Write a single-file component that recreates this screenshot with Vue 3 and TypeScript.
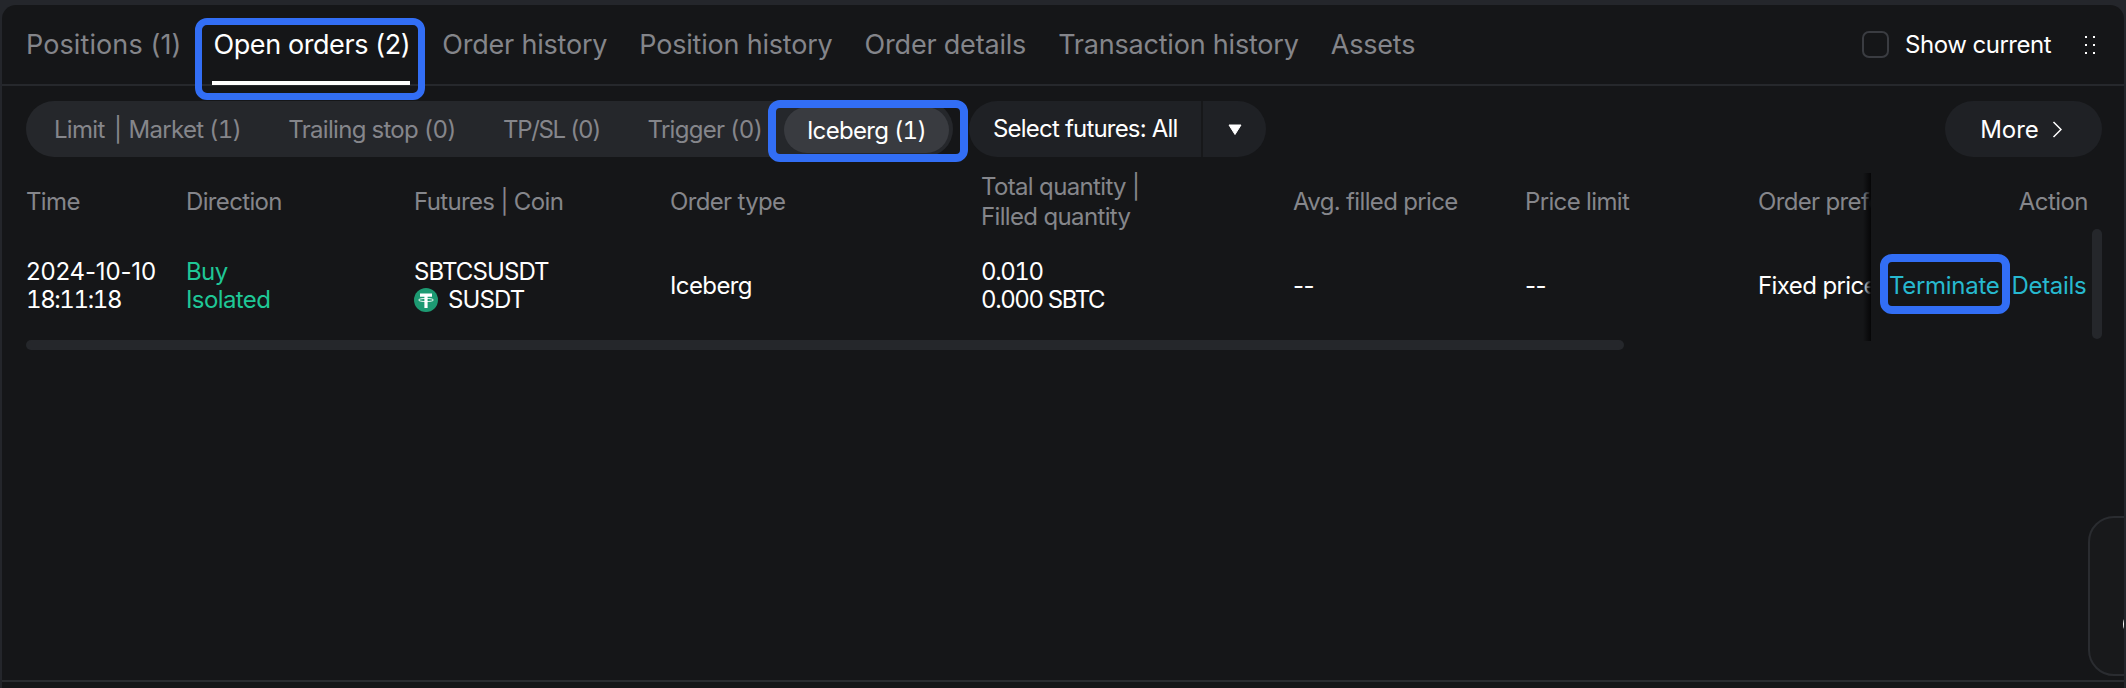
<script setup lang="ts">
const tabs = [
  { label: 'Positions (1)', kind: 'first' },
  { label: 'Open orders (2)', kind: 'active' },
  { label: 'Order history' },
  { label: 'Position history' },
  { label: 'Order details' },
  { label: 'Transaction history' },
  { label: 'Assets' },
]
const subTabs = ['Limit\u2009 | \u200AMarket (1)', 'Trailing stop (0)', 'TP/SL (0)', 'Trigger (0)']
const columns = [
  { key: 'time', width: 160, head: ['Time'] },
  { key: 'dir', width: 228, head: ['Direction'] },
  { key: 'fut', width: 256, head: ['Futures | Coin'] },
  { key: 'type', width: 311, head: ['Order type'] },
  { key: 'qty', width: 312, head: ['Total quantity |', 'Filled quantity'] },
  { key: 'avg', width: 232, head: ['Avg. filled price'] },
  { key: 'lim', width: 233, head: ['Price limit'] },
  { key: 'pref', width: 200, head: ['Order preference'] },
]
</script>

<template>
  <div class="page">
    <div class="panel">
      <header class="tabbar">
        <nav class="tabs">
          <div v-for="t in tabs" :key="t.label" class="tab" :class="t.kind">
            {{ t.label }}
            <span v-if="t.kind === 'active'" class="mark tab-mark"></span>
          </div>
        </nav>
        <div class="tabbar-right">
          <span class="check"></span>
          <span class="show">Show current</span>
          <svg class="grip" width="10" height="18" viewBox="0 0 10 18" fill="#fff">
            <rect x="0" y="0" width="2" height="2" /><rect x="8" y="0" width="2" height="2" />
            <rect x="0" y="8" width="2" height="2" /><rect x="8" y="8" width="2" height="2" />
            <rect x="0" y="16" width="2" height="2" /><rect x="8" y="16" width="2" height="2" />
          </svg>
        </div>
      </header>

      <section class="filters">
        <div class="pillgroup">
          <div class="subs">
            <span v-for="s in subTabs" :key="s" class="sub" :class="{ tight: s.startsWith('TP') }">{{ s }}</span>
          </div>
          <span class="sub current">Iceberg (1)<span class="mark sub-mark"></span></span>
        </div>
        <div class="select">
          <span class="select-label">Select futures: All</span>
          <span class="select-arrow">
            <svg width="14" height="11" viewBox="0 0 14 11"><path d="M1 1h12L7 10.500z" fill="#fff" stroke="#fff" stroke-linejoin="round" /></svg>
          </span>
        </div>
        <div class="more">
          More
          <svg width="10" height="17" viewBox="0 0 10 17" fill="none" stroke="#fff" stroke-width="1.500"><path d="M1.500 1l7.500 7.500-7.500 7.500" /></svg>
        </div>
      </section>

      <section class="table">
        <div class="thead">
          <div v-for="c in columns" :key="c.key" class="th" :style="{ width: c.width + 'px' }">
            <div v-for="h in c.head" :key="h">{{ h }}</div>
          </div>
        </div>
        <div class="trow">
          <div class="td" style="width: 160px"><div class="date">2024-10-10</div><div class="clock">18:11:18</div></div>
          <div class="td green" style="width: 228px"><div>Buy</div><div>Isolated</div></div>
          <div class="td" style="width: 256px">
            <div class="symbol">SBTCSUSDT</div>
            <div class="coin">
              <svg width="24" height="24" viewBox="0 0 24 24">
                <circle cx="12" cy="12" r="12" fill="#1d9a72" />
                <path d="M6 5.500h12v3.200h-4.400V20h-3.200V8.700H6z" fill="#fff" />
                <ellipse cx="12" cy="12" rx="7.500" ry="1.600" fill="none" stroke="#fff" stroke-width="0.900" />
              </svg>
              SUSDT
            </div>
          </div>
          <div class="td" style="width: 311px">Iceberg</div>
          <div class="td qty" style="width: 312px"><div>0.010</div><div>0.000 SBTC</div></div>
          <div class="td" style="width: 232px">--</div>
          <div class="td" style="width: 233px">--</div>
          <div class="td" style="width: 200px">Fixed price</div>
        </div>
        <div class="hbar"></div>

        <aside class="fixed">
          <div class="fixed-head">Action</div>
          <div class="fixed-row">
            <span class="link term">Terminate<span class="mark term-mark"></span></span>
            <span class="link">Details</span>
          </div>
        </aside>
        <div class="vbar"></div>
      </section>

      <div class="floating"><span class="floating-glyph"></span></div>
    </div>
  </div>
</template>

<style>
html, body { margin: 0; background: #16171a; }
</style>

<style scoped>
.page {
  width: 2126px;
  height: 688px;
  overflow: hidden;
  background: #24262b;
  padding-top: 5px;
  box-sizing: border-box;
  font-family: Inter, "Liberation Sans", sans-serif;
  color: #fff;
}
.panel {
  position: relative;
  height: 683px;
  margin: 0 2px;
  background: #151618;
  border-radius: 14px 14px 0 0;
  overflow: hidden;
}
.panel::after {
  content: "";
  position: absolute;
  left: 0;
  right: 0;
  bottom: 6px;
  height: 2px;
  background: #2a2c30;
}
.tabbar {
  height: 79px;
  border-bottom: 2px solid #26282c;
  display: flex;
  justify-content: space-between;
  padding: 0 29px 0 24px;
}
.tabs { display: flex; gap: 32px; }
.tab {
  position: relative;
  font-size: 27px;
  letter-spacing: -0.2px;
  line-height: 80px;
  color: #84858a;
  white-space: nowrap;
}
.tab.first { letter-spacing: 0.1px; }
.tab.active { color: #fff; letter-spacing: -0.4px; }
.mark {
  position: absolute;
  border: 7px solid #326ef5;
  border-radius: 12px;
  box-sizing: border-box;
  pointer-events: none;
}
.tab-mark { left: -18px; right: -15px; top: 13px; height: 82px; }
.tab-mark::after {
  content: "";
  position: absolute;
  left: 10px;
  right: 8px;
  top: 56px;
  height: 4px;
  background: #fff;
}
.tabbar-right { display: flex; align-items: center; }
.check {
  width: 27px;
  height: 27px;
  border: 2px solid #3a3c41;
  border-radius: 7px;
  box-sizing: border-box;
  margin-right: 16px;
}
.show { font-size: 24px; letter-spacing: -0.5px; }
.grip { margin-left: 34px; }
.filters {
  display: flex;
  height: 56px;
  margin-top: 15px;
  padding: 0 22px 0 24px;
  align-items: stretch;
}
.pillgroup {
  display: flex;
  align-items: center;
  justify-content: space-between;
  background: #25272b;
  border-radius: 28px;
  padding: 0 4px 0 28px;
  width: 927px;
  box-sizing: border-box;
}
.subs { display: flex; gap: 47px; }
.sub {
  font-size: 24px;
  letter-spacing: -0.7px;
  font-variant-numeric: tabular-nums;
  color: #85868b;
  white-space: nowrap;
}
.sub.tight { letter-spacing: -1.3px; }
.sub.current {
  position: relative;
  flex: none;
  display: flex;
  align-items: center;
  justify-content: center;
  width: 165px;
  height: 46px;
  margin-top: 2px;
  color: #fff;
  background: #393b40;
  border-radius: 24px;
}
.sub-mark {
  left: -16px;
  right: -19px;
  top: -7px;
  bottom: -9px;
  border-width: 8px;
}
.select {
  display: flex;
  margin-left: 16px;
  background: #1f2125;
  border-radius: 28px;
  width: 297px;
  align-items: center;
  font-size: 24px;
  letter-spacing: -0.8px;
}
.select-label {
  width: 234px;
  padding-left: 24px;
  box-sizing: border-box;
  border-right: 2px solid #17181a;
  line-height: 56px;
  white-space: nowrap;
}
.select-arrow { flex: 1; display: flex; justify-content: center; }
.more {
  margin-left: auto;
  width: 157px;
  background: #1f2125;
  border-radius: 28px;
  display: flex;
  align-items: center;
  justify-content: center;
  gap: 13px;
  padding-right: 5px;
  box-sizing: border-box;
  font-size: 24px;
  letter-spacing: 0;
}
.table { position: relative; padding-top: 15px; }
.thead { display: flex; padding-left: 24px; height: 60px; align-items: center; }
.th {
  flex: none;
  font-size: 24px;
  letter-spacing: -0.65px;
  line-height: 30px;
  color: #85868b;
  white-space: nowrap;
  overflow: hidden;
}
.trow { display: flex; padding-left: 24px; height: 80px; margin-top: 14px; align-items: center; }
.td {
  flex: none;
  font-size: 24px;
  letter-spacing: -0.6px;
  line-height: 28px;
  white-space: nowrap;
  overflow: hidden;
}
.date { letter-spacing: -0.15px; }
.clock { font-variant-numeric: tabular-nums; letter-spacing: -1.4px; }
.symbol { letter-spacing: -0.9px; }
.qty { font-variant-numeric: tabular-nums; letter-spacing: -1.4px; }
.green { color: #1fc796; }
.coin { display: flex; align-items: center; gap: 10px; letter-spacing: -0.9px; }
.hbar {
  margin: 14px 0 0 24px;
  width: 1598px;
  height: 10px;
  border-radius: 5px;
  background: #25272b;
}
.fixed {
  position: absolute;
  left: 1869px;
  top: 16px;
  width: 240px;
  height: 168px;
  background: #151618;
}
.fixed::before {
  content: "";
  position: absolute;
  left: -8px;
  top: 0;
  bottom: 0;
  width: 8px;
  background: linear-gradient(to right, rgba(5, 5, 6, 0), #060607);
}
.fixed-head {
  font-size: 24px;
  letter-spacing: -0.55px;
  color: #85868b;
  text-align: right;
  width: 217px;
  line-height: 58px;
}
.fixed-row {
  display: flex;
  gap: 12px;
  padding-left: 18px;
  margin-top: 15px;
  height: 80px;
  align-items: center;
  font-size: 24px;
  letter-spacing: -0.3px;
  line-height: 28px;
  color: #27b9cf;
}
.link { position: relative; white-space: nowrap; }
.term-mark { left: -9px; right: -11px; top: -18px; bottom: -14px; border-width: 8px; }
.vbar {
  position: absolute;
  left: 2090px;
  top: 72px;
  width: 10px;
  height: 110px;
  border-radius: 5px;
  background: #25272b;
}
.floating {
  position: absolute;
  left: 2086px;
  top: 511px;
  width: 120px;
  height: 160px;
  border: 2px solid #2a2c30;
  border-radius: 26px;
  background: #18191b;
  box-sizing: border-box;
}
.floating-glyph {
  position: absolute;
  left: 33px;
  top: 97px;
  width: 12px;
  height: 18px;
  border-radius: 50%;
  background: #fff;
}
</style>
